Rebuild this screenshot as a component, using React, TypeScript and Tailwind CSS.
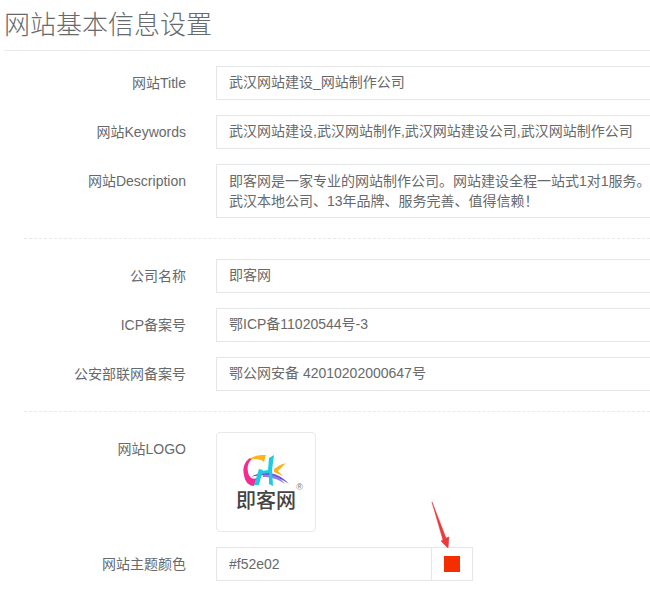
import { useState } from 'react';
import type { ReactNode } from 'react';

const inputClass =
  'block h-[34px] w-full border border-r-0 border-[#e5e6e7] bg-white px-3 text-sm text-[#676a6c] outline-none focus:border-[#1ab394]';

interface FormRowProps {
  label: string;
  htmlFor: string;
  children: ReactNode;
}

function FormRow({ label, htmlFor, children }: FormRowProps) {
  return (
    <div className="flex items-start gap-[30px]">
      <label htmlFor={htmlFor} className="w-[162px] flex-shrink-0 pt-[7px] text-right leading-5">
        {label}
      </label>
      <div className="min-w-0 flex-1">{children}</div>
    </div>
  );
}

interface TextRowProps {
  id: string;
  label: string;
  defaultValue: string;
}

function TextRow({ id, label, defaultValue }: TextRowProps) {
  return (
    <FormRow label={label} htmlFor={id}>
      <input
        id={id}
        name={id}
        type="text"
        defaultValue={defaultValue}
        className={`${inputClass} pb-1`}
      />
    </FormRow>
  );
}

function BrandMark() {
  return (
    <svg viewBox="0 0 48 36" className="block h-9 w-12" aria-hidden="true">
      <path d="M8 5C3 8 0 15 2 22C3 29 7 33 12 33L15 25C10 27 7 24 6 19C5 14 6 9 10 6Z" fill="#f72a94" />
      <path d="M8 6C11 3 17 2 24 2L22 9C19 6 14 6 8 6Z" fill="#fbb41a" />
      <path d="M9 24C20 17 36 18 47 31C36 23 22 20 9 24Z" fill="#6c55dc" />
      <path d="M21 22C31 21 38 24 43 31C36 26 29 24 21 24Z" fill="#9a7bea" />
      <path d="M17 16L21 17L20 20L17 32L12 32Z" fill="#1fcbe0" />
      <path d="M27 5L32 2L30 17L31 33L27 31L27 20L19 21L20 18L26 17Z" fill="#1fcbe0" />
      <path d="M32 16L38 12L44 10L36 18L41 23L32 19Z" fill="#fbb41a" />
    </svg>
  );
}

function Arrow() {
  return (
    <svg
      viewBox="0 0 20 48"
      className="pointer-events-none absolute -top-[46px] left-0 h-12 w-5"
      aria-hidden="true"
    >
      <path d="M1 1L15 37L18 36L17 47L10 40L12 39Z" fill="#e93a3c" stroke="#e93a3c" strokeWidth="0.6" />
    </svg>
  );
}

export default function App() {
  const [color, setColor] = useState('#f52e02');

  return (
    <div className="overflow-x-hidden bg-white font-['Liberation_Sans','Noto_Sans_CJK_SC',sans-serif] text-sm text-[#676a6c]">
      <h1 className="ml-1 h-[51px] border-b border-[#e7eaec] pt-[7px] font-['Liberation_Sans','Noto_Sans_CJK_SC_Light','Noto_Sans_CJK_SC',sans-serif] text-[26px] leading-9 font-light">
        网站基本信息设置
      </h1>

      <form className="pl-6">
        {/* SEO */}
        <div className="space-y-[15px] border-b border-dashed border-[#e7eaec] pt-[15px] pb-5">
          <TextRow id="title" label="网站Title" defaultValue="武汉网站建设_网站制作公司" />
          <TextRow
            id="keywords"
            label="网站Keywords"
            defaultValue="武汉网站建设,武汉网站制作,武汉网站建设公司,武汉网站制作公司"
          />
          <FormRow label="网站Description" htmlFor="description">
            <textarea
              id="description"
              name="description"
              rows={2}
              wrap="off"
              className="block h-[54px] w-full resize-none overflow-hidden border border-r-0 border-[#e5e6e7] bg-white py-1.5 pl-3 text-sm leading-5 whitespace-pre text-[#676a6c] outline-none focus:border-[#1ab394]"
              defaultValue={
                '即客网是一家专业的网站制作公司。网站建设全程一站式1对1服务。\n武汉本地公司、13年品牌、服务完善、值得信赖！'
              }
            />
          </FormRow>
        </div>

        {/* Company */}
        <div className="space-y-[15px] border-b border-dashed border-[#e7eaec] py-5">
          <TextRow id="company" label="公司名称" defaultValue="即客网" />
          <TextRow id="icp" label="ICP备案号" defaultValue="鄂ICP备11020544号-3" />
          <TextRow id="police" label="公安部联网备案号" defaultValue="鄂公网安备 42010202000647号" />
        </div>

        {/* Appearance */}
        <div className="space-y-[15px] py-5">
          <FormRow label="网站LOGO" htmlFor="logo">
            <button
              id="logo"
              type="button"
              className="relative flex h-[100px] w-[100px] flex-col items-center rounded border border-[#e7eaec] bg-white pt-5"
            >
              <BrandMark />
              <span className="text-xl leading-6 font-medium text-[#444444]">即客网</span>
              <span className="absolute top-12 right-3 text-[9px] leading-3 text-[#777777]">®</span>
            </button>
          </FormRow>
          <FormRow label="网站主题颜色" htmlFor="color">
            <div className="relative flex w-[257px]">
              <input
                id="color"
                name="color"
                type="text"
                value={color}
                onChange={(e) => setColor(e.target.value)}
                className={inputClass}
              />
              <div className="relative flex-shrink-0">
                <button
                  type="button"
                  aria-label="选择颜色"
                  className="flex h-[34px] w-[42px] items-center justify-center border border-[#e5e6e7] bg-white"
                >
                  <span className="h-4 w-4" style={{ backgroundColor: color }} />
                </button>
                <Arrow />
              </div>
            </div>
          </FormRow>
        </div>
      </form>
    </div>
  );
}
